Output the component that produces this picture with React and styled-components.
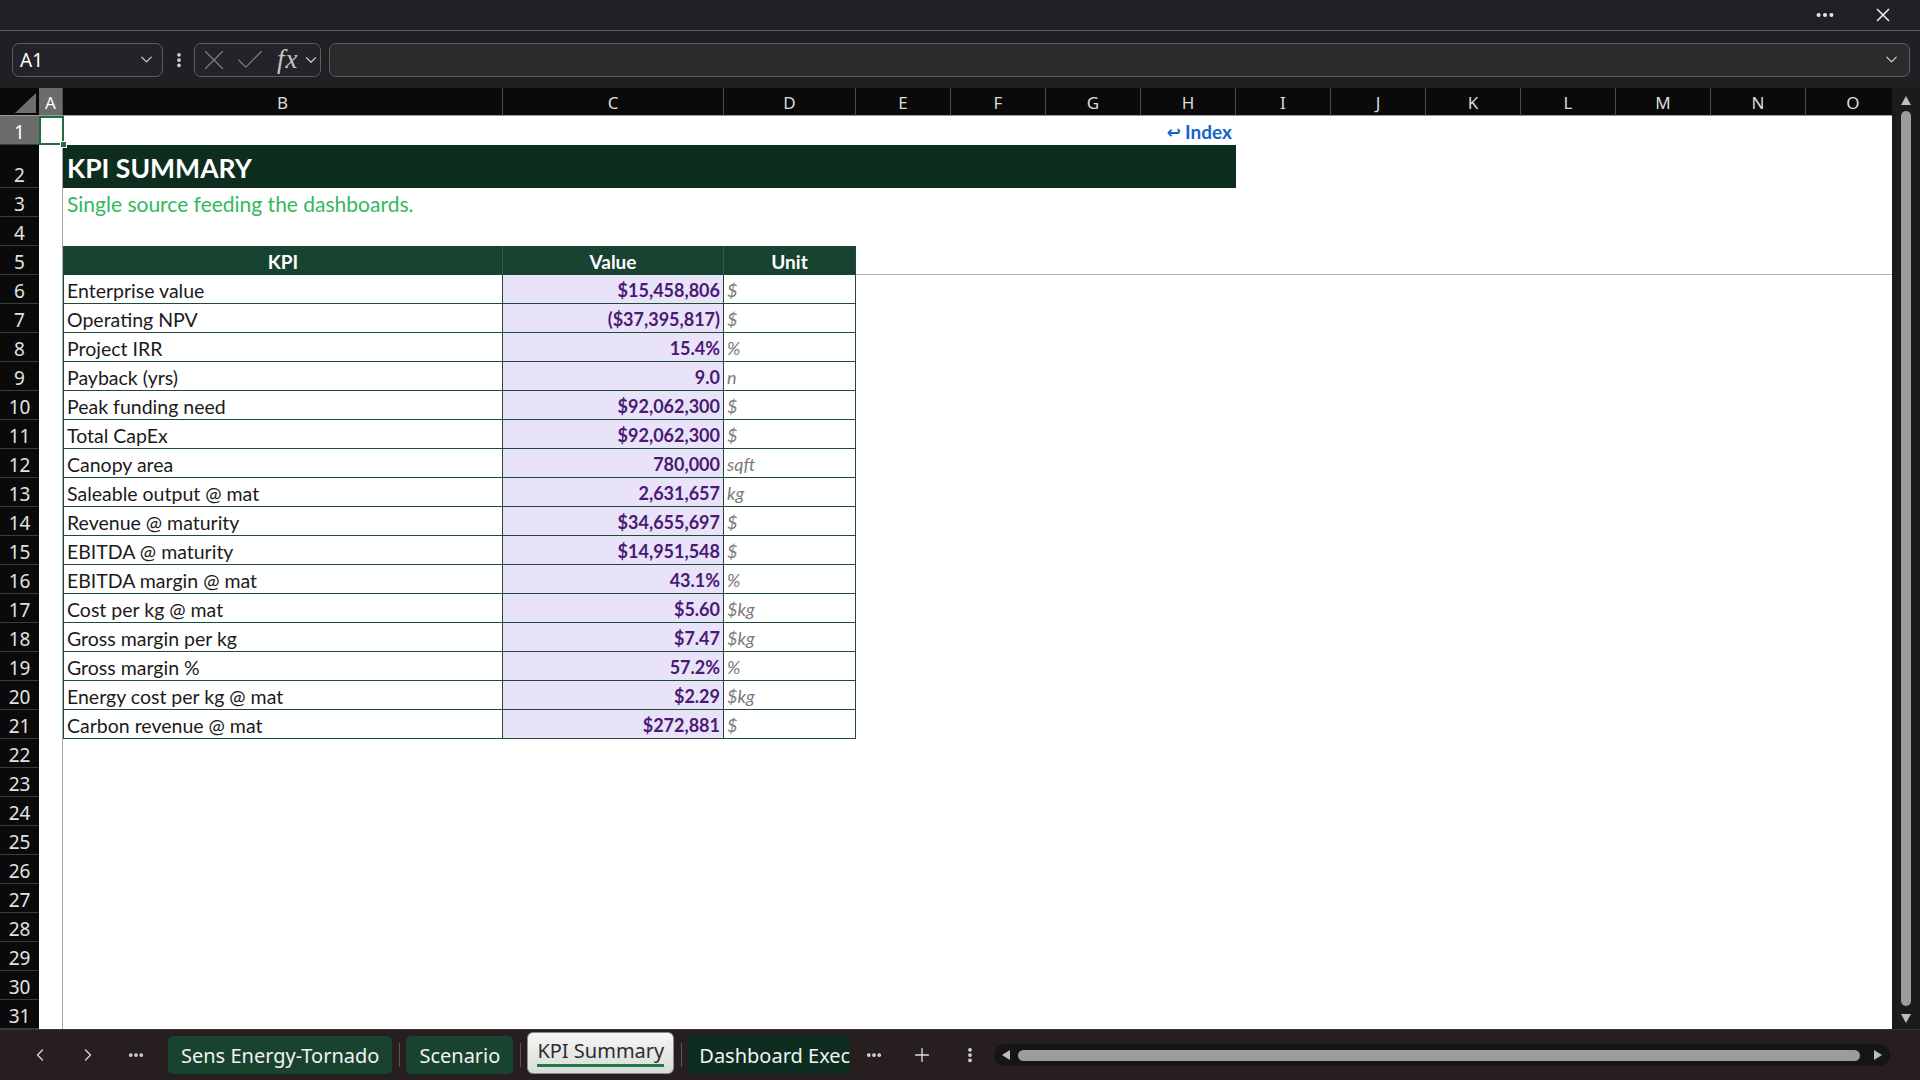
import styled, { createGlobalStyle, css } from "styled-components";
import {
  ChevronDown,
  ChevronLeft,
  ChevronRight,
  X,
  Check,
  Ellipsis,
  EllipsisVertical,
  Plus,
} from "lucide-react";

const GlobalStyle = createGlobalStyle`
  html, body {
    margin: 0;
    padding: 0;
    background: #1f2023;
    overflow: hidden;
  }
  #root { height: 100vh; }
  * { box-sizing: border-box; }
`;

const CHROME_FONT = `"Noto Sans", "Open Sans", "DejaVu Sans", sans-serif`;
const CELL_FONT = `"Lato", "Liberation Sans", "DejaVu Sans", sans-serif`;

const COLUMNS = [
  { id: "A", width: 24 },
  { id: "B", width: 440 },
  { id: "C", width: 221 },
  { id: "D", width: 132 },
  ..."EFGHIJKLMNO".split("").map((id) => ({ id, width: 95 })),
];

const ROW_COUNT = 31;
const rowHeight = (n) => (n === 2 ? 43 : 29);

const KPIS = [
  ["Enterprise value", "$15,458,806", "$"],
  ["Operating NPV", "($37,395,817)", "$"],
  ["Project IRR", "15.4%", "%"],
  ["Payback (yrs)", "9.0", "n"],
  ["Peak funding need", "$92,062,300", "$"],
  ["Total CapEx", "$92,062,300", "$"],
  ["Canopy area", "780,000", "sqft"],
  ["Saleable output @ mat", "2,631,657", "kg"],
  ["Revenue @ maturity", "$34,655,697", "$"],
  ["EBITDA @ maturity", "$14,951,548", "$"],
  ["EBITDA margin @ mat", "43.1%", "%"],
  ["Cost per kg @ mat", "$5.60", "$kg"],
  ["Gross margin per kg", "$7.47", "$kg"],
  ["Gross margin %", "57.2%", "%"],
  ["Energy cost per kg @ mat", "$2.29", "$kg"],
  ["Carbon revenue @ mat", "$272,881", "$"],
];

// grid line helpers: column 1 is the row header, sheet row n sits on grid row n + 1
const colLine = (letter) => COLUMNS.findIndex((c) => c.id === letter) + 2;
const rowLine = (n) => n + 1;

const placed = css`
  grid-row: ${(p) => p.$row};
  grid-column: ${(p) => p.$col};
`;

function App() {
  return (
    <Window>
      <GlobalStyle />
      <TitleBar>
        <Ellipsis size={22} strokeWidth={2.4} />
        <X size={22} strokeWidth={1.8} />
      </TitleBar>

      <FormulaBar>
        <NameBox>
          <NameText>A1</NameText>
          <ChevronDown size={19} strokeWidth={1.6} />
        </NameBox>
        <BarDots>
          <EllipsisVertical size={18} strokeWidth={3} />
        </BarDots>
        <FxGroup>
          <X size={34} strokeWidth={0.9} />
          <Check size={34} strokeWidth={0.9} />
          <FxLabel>fx</FxLabel>
          <FxChevron>
            <ChevronDown size={18} strokeWidth={1.6} />
          </FxChevron>
        </FxGroup>
        <FormulaInput>
          <ChevronDown size={19} strokeWidth={1.6} />
        </FormulaInput>
      </FormulaBar>

      <SheetArea>
        <Grid>
          <Corner>
            <svg width="39" height="28" viewBox="0 0 39 28">
              <polygon points="36,5 36,25 15,25" fill="#6e6e6e" />
            </svg>
          </Corner>
          {COLUMNS.map((c, i) => (
            <ColHeader key={c.id} $row={1} $col={i + 2} $selected={c.id === "A"}>
              {c.id}
            </ColHeader>
          ))}
          {Array.from({ length: ROW_COUNT }, (_, i) => (
            <RowHeader key={i} $row={rowLine(i + 1)} $col={1} $selected={i === 0}>
              {i + 1}
            </RowHeader>
          ))}

          <FreezeColumn $row={`2 / -1`} $col={colLine("A")} />
          <FreezeRow $row={rowLine(5)} $col={`${colLine("A") + 1} / -1`} />

          <SelectedCell $row={rowLine(1)} $col={colLine("A")}>
            <FillHandle />
          </SelectedCell>

          <IndexLink $row={rowLine(1)} $col={colLine("H")}>
            <span>↩</span> Index
          </IndexLink>

          <TitleBand $row={rowLine(2)} $col={`${colLine("B")} / ${colLine("H") + 1}`}>
            KPI SUMMARY
          </TitleBand>
          <Subtitle $row={rowLine(3)} $col={`${colLine("B")} / ${colLine("H") + 1}`}>
            Single source feeding the dashboards.
          </Subtitle>

          <TableHead $row={rowLine(5)} $col={colLine("B")} $first>
            KPI
          </TableHead>
          <TableHead $row={rowLine(5)} $col={colLine("C")}>
            Value
          </TableHead>
          <TableHead $row={rowLine(5)} $col={colLine("D")} $last>
            Unit
          </TableHead>

          {KPIS.map(([label, value, unit], i) => (
            <KpiRow key={label} row={rowLine(6 + i)} label={label} value={value} unit={unit} />
          ))}
        </Grid>

        <VScroll>
          <UpArrow />
          <VThumb />
          <DownArrow />
        </VScroll>
      </SheetArea>

      <TabBar>
        <NavButton>
          <ChevronLeft size={20} strokeWidth={1.6} />
        </NavButton>
        <NavButton>
          <ChevronRight size={20} strokeWidth={1.6} />
        </NavButton>
        <NavButton>
          <Ellipsis size={18} strokeWidth={3} />
        </NavButton>
        <Tab $first>Sens Energy-Tornado</Tab>
        <TabSep />
        <Tab>Scenario</Tab>
        <TabSep />
        <ActiveTab>
          <ActiveLabel>KPI Summary</ActiveLabel>
        </ActiveTab>
        <TabSep />
        <Tab $clipped>Dashboard Exec</Tab>
        <SmallButton>
          <Ellipsis size={18} strokeWidth={3} />
        </SmallButton>
        <SmallButton>
          <Plus size={22} strokeWidth={1.5} />
        </SmallButton>
        <SmallButton>
          <EllipsisVertical size={18} strokeWidth={3} />
        </SmallButton>
        <HScroll>
          <LeftArrow />
          <HThumb />
          <RightArrow />
        </HScroll>
      </TabBar>
    </Window>
  );
}

function KpiRow({ row, label, value, unit }) {
  return (
    <>
      <LabelCell $row={row} $col={colLine("B")}>
        {label}
      </LabelCell>
      <ValueCell $row={row} $col={colLine("C")}>
        {value}
      </ValueCell>
      <UnitCell $row={row} $col={colLine("D")}>
        {unit}
      </UnitCell>
    </>
  );
}

const Window = styled.div`
  display: flex;
  flex-direction: column;
  height: 100vh;
  background: #1f2023;
  font-family: ${CHROME_FONT};
`;

const TitleBar = styled.div`
  height: 31px;
  flex: none;
  display: flex;
  align-items: center;
  justify-content: flex-end;
  gap: 36px;
  padding-right: 26px;
  background: #1f2125;
  border-bottom: 1px solid #5b5b5b;
  color: #e8e8e8;
`;

const FormulaBar = styled.div`
  height: 57px;
  flex: none;
  display: flex;
  align-items: center;
  padding: 0 10px 0 12px;
  background: #1f2023;
`;

const NameBox = styled.div`
  width: 151px;
  height: 34px;
  display: flex;
  align-items: center;
  justify-content: space-between;
  padding: 0 6px 0 7px;
  border: 1px solid #5d5d5d;
  border-radius: 7px;
  background: #232427;
  color: #d0d0d0;
`;

const NameText = styled.span`
  color: #ffffff;
  font-size: 19px;
`;

const BarDots = styled.div`
  width: 31px;
  display: flex;
  justify-content: center;
  color: #d8d8d8;
`;

const FxGroup = styled.div`
  width: 127px;
  height: 34px;
  display: flex;
  align-items: center;
  padding: 0 0 0 2px;
  border: 1px solid #5d5d5d;
  border-radius: 7px;
  background: #232427;
  color: #7c7c7c;
  overflow: hidden;

  & > svg {
    flex: none;
    margin-right: 2px;
  }
`;

const FxLabel = styled.span`
  margin-left: 8px;
  font-family: "Liberation Serif", "DejaVu Serif", serif;
  font-style: italic;
  font-size: 27px;
  line-height: 1;
  color: #c4c4c4;
  letter-spacing: 1px;
`;

const FxChevron = styled.span`
  display: flex;
  margin-left: 3px;
  color: #c8c8c8;
`;

const FormulaInput = styled.div`
  flex: 1;
  height: 34px;
  margin-left: 8px;
  display: flex;
  align-items: center;
  justify-content: flex-end;
  padding-right: 8px;
  border: 1px solid #5d5d5d;
  border-radius: 7px;
  background: #2b2b2b;
  color: #d0d0d0;
`;

const SheetArea = styled.div`
  flex: 1;
  min-height: 0;
  display: flex;
`;

const Grid = styled.div`
  flex: 1;
  min-width: 0;
  overflow: hidden;
  display: grid;
  grid-template-columns: 39px ${COLUMNS.map((c) => `${c.width}px`).join(" ")};
  grid-template-rows: 28px ${Array.from({ length: ROW_COUNT }, (_, i) => `${rowHeight(i + 1)}px`).join(" ")};
  background: #ffffff;
  font-family: ${CELL_FONT};
`;

const Corner = styled.div`
  grid-row: 1;
  grid-column: 1;
  background: #0a0a0a;
  border-bottom: 1px solid #9c9c9c;
  svg { display: block; }
`;

const ColHeader = styled.div`
  ${placed};
  display: flex;
  align-items: center;
  justify-content: center;
  padding-top: 2px;
  background: ${(p) => (p.$selected ? "#6b6b6b" : "#0a0a0a")};
  border-right: 1px solid #4d4d4d;
  border-bottom: 1px solid #9c9c9c;
  color: ${(p) => (p.$selected ? "#ffffff" : "#dcdcdc")};
  font-family: ${CHROME_FONT};
  font-size: 17px;
`;

const RowHeader = styled.div`
  ${placed};
  display: flex;
  align-items: flex-end;
  justify-content: center;
  padding-bottom: 0;
  background: ${(p) => (p.$selected ? "#6b6b6b" : "#0a0a0a")};
  border-bottom: 1px solid #3c3c3c;
  color: ${(p) => (p.$selected ? "#ffffff" : "#e2e2e2")};
  font-family: ${CHROME_FONT};
  font-size: 19px;
  line-height: 24px;
`;

const FreezeColumn = styled.div`
  ${placed};
  border-right: 1px solid #a6a6a6;
`;

const FreezeRow = styled.div`
  ${placed};
  border-bottom: 1px solid #b4b4b4;
`;

const SelectedCell = styled.div`
  ${placed};
  position: relative;
  border: 2px solid #1e6e42;
  margin-right: -1px;
`;

const FillHandle = styled.div`
  position: absolute;
  right: -5px;
  bottom: -5px;
  width: 7px;
  height: 7px;
  background: #1e6e42;
  border: 1px solid #ffffff;
`;

const IndexLink = styled.div`
  ${placed};
  display: flex;
  align-items: center;
  justify-content: flex-end;
  gap: 4px;
  padding: 2px 4px 0 0;
  color: #1466c6;
  font-weight: 700;
  font-size: 19px;

  span {
    font-family: "DejaVu Sans", sans-serif;
    font-weight: 700;
    font-size: 17px;
  }
`;

const TitleBand = styled.div`
  ${placed};
  display: flex;
  align-items: center;
  padding: 3px 0 0 4px;
  background: #0d2e1f;
  color: #ffffff;
  font-weight: 700;
  font-size: 26.5px;
`;

const Subtitle = styled.div`
  ${placed};
  display: flex;
  align-items: center;
  padding: 2px 0 0 4px;
  color: #35b75e;
  font-size: 21px;
`;

const TableHead = styled.div`
  ${placed};
  display: flex;
  align-items: center;
  justify-content: center;
  padding-top: 2px;
  background: #174330;
  color: #ffffff;
  font-weight: 700;
  font-size: 19px;
  border-right: 1px solid ${(p) => (p.$last ? "#1e4a36" : "#2e5c46")};
  border-left: ${(p) => (p.$first ? "1px solid #1e4a36" : "none")};
`;

const bodyCell = css`
  ${placed};
  display: flex;
  align-items: center;
  padding-top: 2px;
  border-right: 1px solid #1e4a36;
  border-bottom: 1px solid #1e4a36;
  white-space: nowrap;
`;

const LabelCell = styled.div`
  ${bodyCell};
  padding-left: 3px;
  border-left: 1px solid #1e4a36;
  color: #1b1b1b;
  font-size: 19.5px;
`;

const ValueCell = styled.div`
  ${bodyCell};
  justify-content: flex-end;
  padding-right: 3px;
  background: #e8e3f8;
  color: #4a1a74;
  font-weight: 700;
  font-size: 18px;
`;

const UnitCell = styled.div`
  ${bodyCell};
  padding-left: 3px;
  color: #7b7b7b;
  font-style: italic;
  font-size: 18px;
`;

const VScroll = styled.div`
  width: 28px;
  flex: none;
  display: flex;
  flex-direction: column;
  align-items: center;
  padding: 8px 0 6px;
  background: #1b1b1b;
`;

const UpArrow = styled.div`
  width: 0;
  height: 0;
  border-left: 5px solid transparent;
  border-right: 5px solid transparent;
  border-bottom: 9px solid #bdbdbd;
`;

const DownArrow = styled.div`
  width: 0;
  height: 0;
  border-left: 5px solid transparent;
  border-right: 5px solid transparent;
  border-top: 9px solid #bdbdbd;
`;

const VThumb = styled.div`
  flex: 1;
  width: 10px;
  margin: 6px 0 8px;
  border-radius: 5px;
  background: #9c9c9c;
`;

const TabBar = styled.div`
  height: 51px;
  flex: none;
  display: flex;
  align-items: center;
  padding: 0 30px 0 16px;
  background: #271f1f;
  border-top: 1px solid #3b3232;
  color: #e6e6e6;
  font-size: 20px;
`;

const NavButton = styled.div`
  width: 48px;
  flex: none;
  display: flex;
  justify-content: center;
  color: #d6d6d6;
`;

const Tab = styled.div`
  height: 38px;
  flex: none;
  display: flex;
  align-items: center;
  white-space: nowrap;
  overflow: hidden;
  padding: ${(p) => (p.$clipped ? "0 0 0 11px" : "0 13px")};
  margin-left: ${(p) => (p.$first ? "8px" : "0")};
  width: ${(p) => (p.$clipped ? "162px" : "auto")};
  border-radius: ${(p) => (p.$clipped ? "5px 0 0 5px" : "5px")};
  background: ${(p) => (p.$clipped ? "#0c2d1f" : "#17432f")};
  color: #f2f2f2;
`;

const TabSep = styled.div`
  width: 1px;
  height: 24px;
  flex: none;
  margin: 0 6px 0 7px;
  background: #5e5454;
`;

const ActiveTab = styled.div`
  height: 42px;
  flex: none;
  margin: -4px 0 0;
  display: flex;
  align-items: center;
  padding: 0 9px;
  border-radius: 6px;
  border: 1px solid #8c8c8c;
  background: linear-gradient(#f6f6f6, #d8dcd8);
  color: #2d2d2d;
`;

const ActiveLabel = styled.span`
  border-bottom: 3px solid #1e7b45;
  line-height: 26px;
  margin-top: -2px;
`;

const SmallButton = styled.div`
  width: 48px;
  flex: none;
  display: flex;
  justify-content: center;
  color: #dcdcdc;
`;

const HScroll = styled.div`
  flex: 1;
  margin-left: 0;
  height: 22px;
  display: flex;
  align-items: center;
  gap: 6px;
  padding: 0 8px;
  border-radius: 11px;
  background: #151515;
`;

const LeftArrow = styled.div`
  width: 0;
  height: 0;
  border-top: 5px solid transparent;
  border-bottom: 5px solid transparent;
  border-right: 8px solid #bdbdbd;
`;

const RightArrow = styled.div`
  width: 0;
  height: 0;
  border-top: 5px solid transparent;
  border-bottom: 5px solid transparent;
  border-left: 8px solid #bdbdbd;
`;

const HThumb = styled.div`
  flex: 1;
  height: 11px;
  margin: 0 8px 0 2px;
  border-radius: 6px;
  background: #9c9c9c;
`;

export default App;
